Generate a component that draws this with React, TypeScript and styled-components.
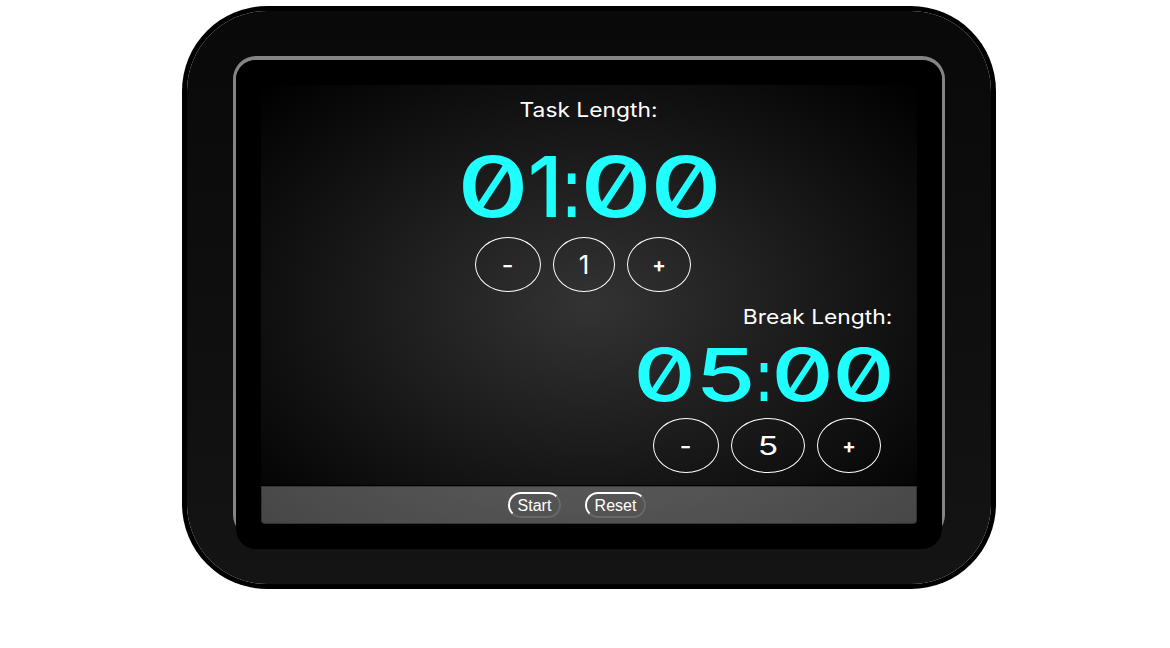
import React, { useState } from "react";
import styled, { createGlobalStyle } from "styled-components";

const GlobalStyle = createGlobalStyle`
  html, body { margin: 0; background: #fff; overflow: hidden; }
  *, *::before, *::after { box-sizing: border-box; }
`;

const Page = styled.main`
  display: flex;
  justify-content: center;
  width: 1170px;
  height: 648px;
  padding: 11px 0 0 8px;
`;

const Device = styled.section`
  display: flex;
  flex-direction: column;
  align-items: center;
  width: 804px;
  height: 573px;
  padding-top: 45px;
  border-radius: 80px;
  background: linear-gradient(#090909, #141414);
  box-shadow: 0 0 0 5px #000;
`;

const Rim = styled.div`
  width: 712px;
  height: 482px;
  border: 3px solid #848484;
  border-top-width: 4px;
  border-radius: 23px;
`;

const Bezel = styled.div`
  width: 706px;
  height: 489px;
  padding: 25px;
  border-radius: 20px;
  background: #000;
`;

const Screen = styled.div`
  display: flex;
  flex-direction: column;
  width: 656px;
  height: 439px;
  border-radius: 3px;
  background: radial-gradient(#333, #000);
  color: #fff;
  font-family: Inter, sans-serif;
`;

const Timer = styled.div<{ $side?: boolean }>`
  display: flex;
  flex-direction: column;
  align-items: ${(p) => (p.$side ? "flex-end" : "center")};
  height: ${(p) => (p.$side ? 184 : 217)}px;
  padding: ${(p) => (p.$side ? "3px 25px 0 0" : "13px 0 0")};
  border-bottom: ${(p) => (p.$side ? "1px solid #000" : "none")};
`;

const Title = styled.h2<{ $width: number }>`
  flex: none;
  display: flex;
  justify-content: center;
  width: ${(p) => p.$width}px;
  margin: 0;
  font-size: 20px;
  font-weight: 400;
  line-height: 24px;
  white-space: nowrap;
`;

const Stretch = styled.span<{ $x: number }>`
  display: inline-block;
  transform: scaleX(${(p) => p.$x});
`;

const Clock = styled.div<{ $size: number; $top: number; $right?: number }>`
  flex: none;
  display: flex;
  height: ${(p) => p.$size}px;
  margin: ${(p) => `${p.$top}px ${p.$right ?? 0}px 0 0`};
  color: #20ffff;
  font-size: ${(p) => p.$size}px;
  font-weight: 450;
  line-height: ${(p) => p.$size}px;
  font-feature-settings: "zero" 1, "ss07" 1;
  white-space: nowrap;
`;

const Glyph = styled.span<{ $w: number }>`
  display: flex;
  justify-content: center;
  width: ${(p) => p.$w}em;
`;

const Controls = styled.div<{ $side?: boolean }>`
  display: flex;
  gap: 12px;
  margin: ${(p) => (p.$side ? "7px 11px 0 0" : "8px 12px 0 0")};
`;

const Round = styled.button<{ $width: number; $value?: boolean }>`
  width: ${(p) => p.$width}px;
  height: 55px;
  padding: 0;
  border: 1px solid #fff;
  border-radius: 50%;
  background: transparent;
  color: #fff;
  font-family: Inter, sans-serif;
  font-size: ${(p) => (p.$value ? 26 : 20)}px;
  font-weight: ${(p) => (p.$value ? 400 : 700)};
`;

const Footer = styled.footer`
  display: flex;
  justify-content: center;
  gap: 24px;
  height: 38px;
  padding: 5px 24px 0 0;
  border: 1px solid rgba(0, 0, 0, 0.3);
  border-radius: 0 0 4px 4px;
  background: rgba(255, 255, 255, 0.28);
`;

const Action = styled.button<{ $width: number }>`
  width: ${(p) => p.$width}px;
  height: 26px;
  padding: 2px 0 0;
  border: 2px solid;
  border-color: #fff #686868 #686868 #fff;
  border-radius: 13px;
  background: transparent;
  color: #fff;
  font: 16px/20px "Liberation Sans", Arial, sans-serif;
`;

const cell = (c: string) => (c === ":" ? 0.222 : c === "1" ? 0.405 : 0.836);
const stretch = (c: string) => (c === ":" ? 0.7 : c === "1" ? 1 : c === "5" ? 1.34 : 1.33);

function Time({ minutes, ...box }: { minutes: number; $size: number; $top: number; $right?: number }) {
  const text = String(minutes).padStart(2, "0") + ":00";
  return (
    <Clock {...box}>
      {text.split("").map((c, i) => (
        <Glyph key={i} $w={cell(c)}><Stretch $x={stretch(c)}>{c}</Stretch></Glyph>
      ))}
    </Clock>
  );
}

export default function App() {
  const [task, setTask] = useState(1);
  const [rest, setRest] = useState(5);
  const reset = () => {
    setTask(1);
    setRest(5);
  };
  return (
    <>
      <GlobalStyle />
      <Page>
        <Device>
          <Rim>
            <Bezel>
              <Screen>
                <Timer>
                  <Title $width={138}><Stretch $x={1.14}>Task Length:</Stretch></Title>
                  <Time minutes={task} $size={84} $top={23} $right={-1} />
                  <Controls>
                    <Round $width={66} onClick={() => setTask(Math.max(1, task - 1))}><Stretch $x={1.25}>-</Stretch></Round>
                    <Round $width={62} $value>{task}</Round>
                    <Round $width={64} onClick={() => setTask(task + 1)}>+</Round>
                  </Controls>
                </Timer>
                <Timer $side>
                  <Title $width={149}><Stretch $x={1.14}>Break Length:</Stretch></Title>
                  <Time minutes={rest} $size={73} $top={9} $right={-2} />
                  <Controls $side>
                    <Round $width={66} onClick={() => setRest(Math.max(1, rest - 1))}><Stretch $x={1.25}>-</Stretch></Round>
                    <Round $width={74} $value><Stretch $x={1.3}>{rest}</Stretch></Round>
                    <Round $width={64} onClick={() => setRest(rest + 1)}>+</Round>
                  </Controls>
                </Timer>
                <Footer>
                  <Action $width={53}>Start</Action>
                  <Action $width={61} onClick={reset}>Reset</Action>
                </Footer>
              </Screen>
            </Bezel>
          </Rim>
        </Device>
      </Page>
    </>
  );
}
